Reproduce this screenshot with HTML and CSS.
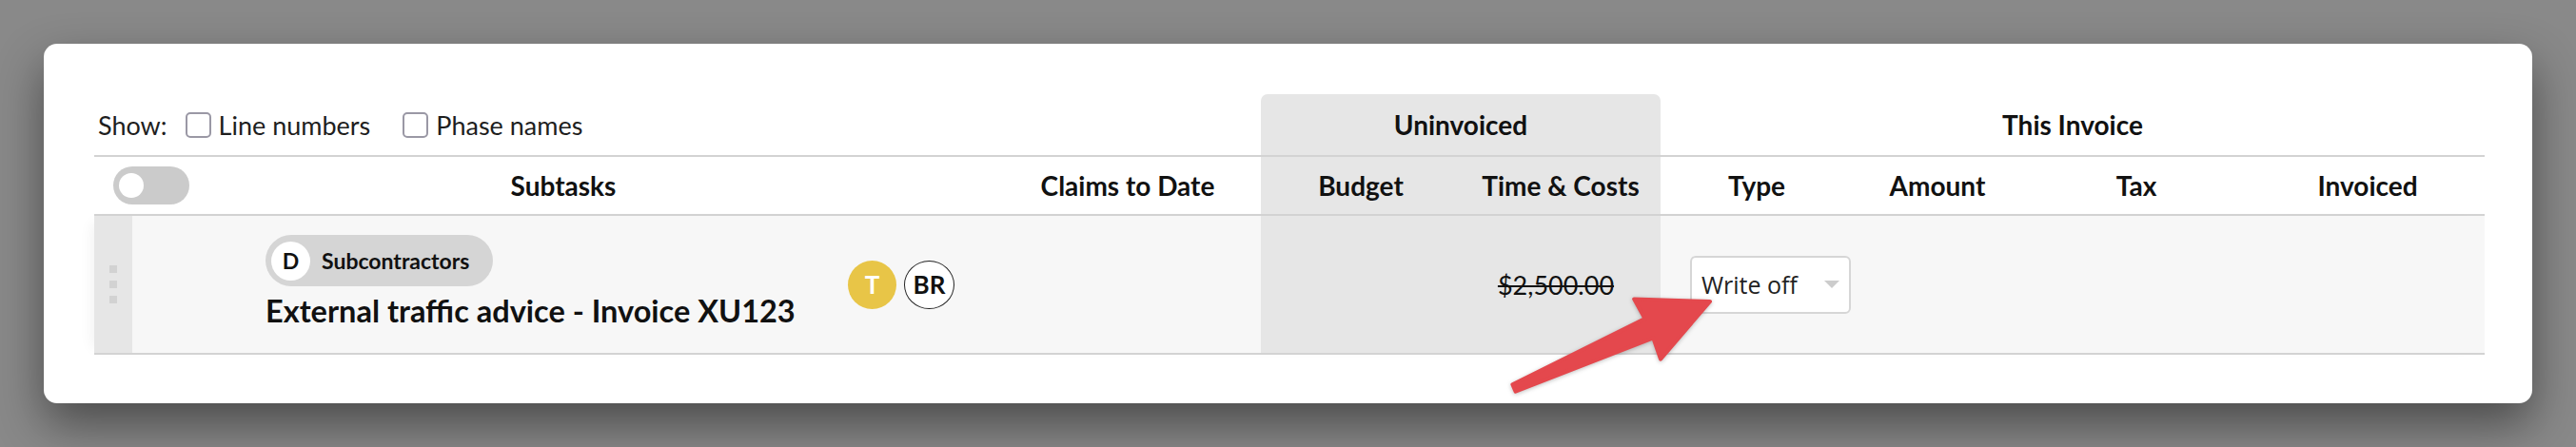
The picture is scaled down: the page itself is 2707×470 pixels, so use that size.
FILE: index.html
```html
<!DOCTYPE html>
<html lang="en">
<head>
<meta charset="utf-8">
<title>Invoice subtasks</title>
<link rel="stylesheet" href="styles.css">
</head>
<body>
<div class="card">
  <div class="table">
    <div class="row group-row">
      <div class="show-options">
        <span class="show-label">Show:</span>
        <label class="check"><span class="box"></span>Line numbers</label>
        <label class="check"><span class="box"></span>Phase names</label>
      </div>
      <div class="group uninvoiced-group">Uninvoiced</div>
      <div class="group invoice-group">This Invoice</div>
    </div>
    <div class="row head-row">
      <div class="cell toggle-cell"><span class="toggle"><span class="knob"></span></span></div>
      <div class="cell th">Subtasks</div>
      <div class="cell th">Claims to Date</div>
      <div class="cell th un">Budget</div>
      <div class="cell th un">Time &amp; Costs</div>
      <div class="cell th">Type</div>
      <div class="cell th">Amount</div>
      <div class="cell th">Tax</div>
      <div class="cell th">Invoiced</div>
    </div>
    <div class="row body-row">
      <div class="cell handle"><span class="dot"></span><span class="dot"></span><span class="dot"></span></div>
      <div class="cell subtask">
        <div class="subtask-text">
          <span class="pill"><span class="pill-letter">D</span>Subcontractors</span>
          <div class="title">External traffic advice - Invoice XU123</div>
        </div>
        <div class="avatars">
          <span class="avatar avatar-yellow">T</span>
          <span class="avatar avatar-outline">BR</span>
        </div>
      </div>
      <div class="cell"></div>
      <div class="cell un"></div>
      <div class="cell un value"><span class="struck">$2,500.00</span></div>
      <div class="cell type-cell">
        <div class="select">Write off<span class="caret"></span></div>
      </div>
      <div class="cell"></div>
      <div class="cell"></div>
      <div class="cell"></div>
    </div>
  </div>
  <svg class="arrow" width="240" height="130" viewBox="0 0 240 130" aria-hidden="true">
    <polygon points="222,17 142.1,14.4 153.5,35.1 14.4,104.3 17.6,111.7 162.3,55.3 170,77.6" fill="#e4484d" stroke="#e4484d" stroke-width="4" stroke-linejoin="round"/>
  </svg>
</div>
</body>
</html>
```
FILE: styles.css
```css
html, body {
  margin: 0;
}

body {
  padding: 46px;
  background: #898989;
  font-family: Lato, "Liberation Sans", sans-serif;
  color: #111;
}

.card {
  position: relative;
  background: #fff;
  border-radius: 14px;
  padding: 53px 50px 51px 53px;
  box-shadow: 0 22px 50px rgba(0, 0, 0, 0.45);
}

.row {
  display: grid;
  grid-template-columns: 40px 906px 280px 210px 210px 202px 178px 240px 246px;
}

/* group header row */
.group-row {
  height: 64px;
}

.show-options {
  grid-column: 1 / 4;
  display: flex;
  align-items: center;
  padding-left: 4px;
  font-size: 27px;
  color: #1e1e1e;
}

.show-label {
  margin-right: 19px;
}

.check {
  display: flex;
  align-items: center;
  margin-right: 34px;
}

.box {
  width: 27px;
  height: 27px;
  box-sizing: border-box;
  border: 2px solid #9a98a5;
  border-radius: 5px;
  background: #fff;
  margin-right: 8px;
}

.group {
  display: flex;
  align-items: center;
  justify-content: center;
  font-weight: 700;
  font-size: 28px;
}

.uninvoiced-group {
  grid-column: 4 / 6;
  background: #e6e6e6;
  border-radius: 7px 7px 0 0;
}

.invoice-group {
  grid-column: 6 / 10;
}

/* column header row */
.head-row {
  height: 60px;
  border-top: 2px solid #d3d3d3;
  border-bottom: 2px solid #d3d3d3;
}

.cell {
  display: flex;
  align-items: center;
}

.th {
  justify-content: center;
  font-weight: 700;
  font-size: 28px;
}

.un {
  background: #e6e6e6;
}

.toggle-cell {
  overflow: visible;
}

.toggle {
  flex: none;
  display: flex;
  align-items: center;
  width: 80px;
  height: 40px;
  margin-left: 20px;
  padding-left: 6px;
  box-sizing: border-box;
  border-radius: 20px;
  background: #cbcbcb;
}

.knob {
  width: 26px;
  height: 26px;
  border-radius: 50%;
  background: #fff;
}

/* body row */
.body-row {
  height: 144px;
  border-bottom: 2px solid #d3d3d3;
  background: #f7f7f7;
  box-shadow: -10px 0 14px -8px rgba(0, 0, 0, 0.06);
}

.handle {
  background: #e6e6e6;
  flex-direction: column;
  justify-content: center;
  gap: 8px;
}

.dot {
  width: 8px;
  height: 8px;
  background: #d2d2d2;
}

.subtask {
  padding-left: 140px;
}

.subtask-text {
  flex: none;
  width: 612px;
  margin-bottom: 5px;
}

.pill {
  display: inline-flex;
  align-items: center;
  height: 54px;
  box-sizing: border-box;
  padding: 0 25px 0 6px;
  border-radius: 27px;
  background: #d5d5d5;
  font-weight: 700;
  font-size: 23px;
}

.pill-letter {
  display: flex;
  align-items: center;
  justify-content: center;
  width: 41px;
  height: 41px;
  border-radius: 50%;
  background: #fff;
  margin-right: 12px;
}

.title {
  margin-top: 6px;
  font-weight: 700;
  font-size: 32.5px;
  line-height: 1.2;
  white-space: nowrap;
}

.avatars {
  display: flex;
  gap: 8px;
}

.avatar {
  display: flex;
  align-items: center;
  justify-content: center;
  width: 51px;
  height: 51px;
  box-sizing: border-box;
  border-radius: 50%;
  font-weight: 700;
  font-size: 26px;
}

.avatar-yellow {
  background: #e8c547;
  color: #fff;
}

.avatar-outline {
  width: 53px;
  background: #fff;
  border: 1.5px solid #222;
  color: #111;
}

.value {
  justify-content: center;
  font-size: 27px;
}

.struck {
  text-decoration: line-through;
  margin-right: 10px;
}

.type-cell {
  padding-left: 31px;
}

.select {
  display: flex;
  align-items: center;
  width: 169px;
  height: 61px;
  box-sizing: border-box;
  padding: 0 10px 0 10px;
  border: 2px solid #d6d6d6;
  border-radius: 6px;
  background: #fff;
  font-family: "Open Sans", "Noto Sans", sans-serif;
  font-size: 25px;
  color: #222;
}

.caret {
  margin-left: auto;
  width: 0;
  height: 0;
  border-left: 8.5px solid transparent;
  border-right: 8.5px solid transparent;
  border-top: 8px solid #cccccc;
}

.arrow {
  position: absolute;
  left: 1529px;
  top: 254px;
  filter: drop-shadow(0 1px 2px rgba(0, 0, 0, 0.25));
}
```
